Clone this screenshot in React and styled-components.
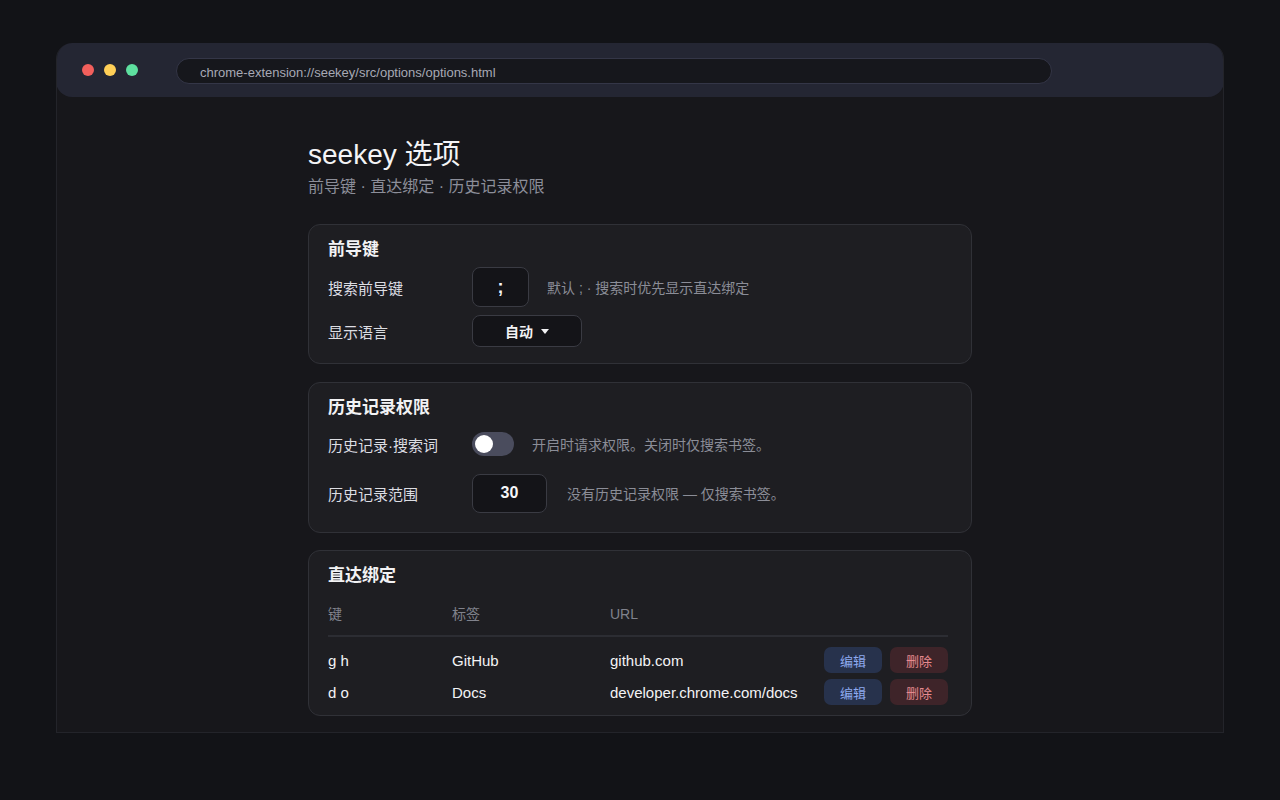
import React from 'react'
import styled, { createGlobalStyle } from 'styled-components'

const GlobalStyle = createGlobalStyle`
html, body {
    margin: 0;
    padding: 0;
    background: #121317;
    font-family: "Liberation Sans", "Noto Sans CJK SC", sans-serif;
    color: #f0f0f3;
}
* { box-sizing: border-box; }
`

const Page = styled.div`
padding: 43px 56px 0 56px;
height: 800px;
`
const Window = styled.div`
height: 690px;
display: flex;
flex-direction: column;
background: #17171b;
border: 1px solid #23242a;
border-top: none;
border-radius: 16px 16px 0 0;
overflow: hidden;
`
const TitleBar = styled.div`
flex: 0 0 54px;
display: flex;
align-items: center;
padding: 2px 26px 0 26px;
background: #242633;
border-radius: 16px;
margin: 0 -1px;
`
const Dots = styled.div`
display: flex;
gap: 10px;
margin-top: -2px;
`
const Dot = styled.span`
width: 12px;
height: 12px;
border-radius: 50%;
background: ${p => p.$c};
`
const UrlBar = styled.div`
margin-left: 38px;
width: 876px;
height: 26px;
border-radius: 13px;
background: #16171c;
border: 1px solid #343647;
display: flex;
align-items: center;
padding: 2px 0 0 23px;
font-size: 13px;
color: #a7a9b5;
`
const Main = styled.main`
flex: 1;
display: flex;
justify-content: center;
padding-top: 41px;
`
const Column = styled.div`
width: 664px;
display: flex;
flex-direction: column;
`
const Title = styled.h1`
margin: 0;
font-size: 28px;
line-height: 34px;
font-weight: 400;
color: #f4f4f6;
`
const Subtitle = styled.div`
margin-top: 5px;
font-size: 16px;
line-height: 20px;
color: #8c8e99;
`
const Card = styled.section`
margin-top: ${p => p.$top || 18}px;
background: #1e1e22;
border: 1px solid #303137;
border-radius: 12px;
padding: 14px 23px ${p => p.$pb || 15}px 19px;
`
const CardTitle = styled.h2`
margin: 0 0 ${p => p.$mb || 8}px 0;
font-size: 17px;
line-height: 22px;
font-weight: 600;
color: #f2f2f4;
`
const Rows = styled.div`
display: flex;
flex-direction: column;
gap: 8px;
`
const Row = styled.div`
display: flex;
align-items: center;
min-height: ${p => p.$h || 40}px;
`
const Label = styled.div`
width: 144px;
font-size: 15px;
color: #dcdde2;
`
const Hint = styled.div`
margin-left: ${p => p.$ml || 18}px;
font-size: 14px;
color: #8b8d97;
`
const KeyInput = styled.div`
width: ${p => p.$w}px;
height: ${p => p.$h}px;
border-radius: 8px;
background: #141418;
border: 1px solid #3a3b43;
display: flex;
align-items: center;
justify-content: center;
font-size: ${p => p.$fs || 16}px;
font-weight: 700;
color: #f6f6f8;
`
const Select = styled.div`
width: 110px;
height: 32px;
border-radius: 8px;
background: #141418;
border: 1px solid #3a3b43;
display: flex;
align-items: center;
justify-content: center;
gap: 8px;
font-size: 14px;
font-weight: 600;
color: #f2f2f4;
`
const Caret = styled.span`
width: 0;
height: 0;
border-left: 4.5px solid transparent;
border-right: 4.5px solid transparent;
border-top: 5px solid #f2f2f4;
margin-top: 1px;
`
const Toggle = styled.div`
width: 42px;
height: 24px;
border-radius: 12px;
background: #4a4c5d;
display: flex;
align-items: center;
padding-left: 3px;
`
const Knob = styled.span`
width: 18px;
height: 18px;
border-radius: 50%;
background: #ffffff;
`
const TableHead = styled.div`
display: grid;
grid-template-columns: 124px 158px 1fr;
margin-top: 13px;
padding: 4px 0 11px 0;
border-bottom: 2px solid #2c2d33;
font-size: 14px;
line-height: 20px;
color: #80828c;
`
const TableBody = styled.div`
padding-top: 7px;
`
const TableRow = styled.div`
display: grid;
grid-template-columns: 124px 158px 1fr auto;
align-items: center;
height: 32px;
font-size: 15px;
color: #f3f3f5;
`
const Actions = styled.div`
display: flex;
gap: 8px;
`
const Btn = styled.button`
width: 58px;
height: 26px;
border: none;
border-radius: 7px;
font-family: inherit;
font-size: 13px;
background: ${p => (p.$danger ? '#3e2429' : '#27324c')};
color: ${p => (p.$danger ? '#e68a8f' : '#8eaaf0')};
cursor: pointer;
`

const bindings = [
    { key: 'g h', label: 'GitHub', url: 'github.com' },
    { key: 'd o', label: 'Docs', url: 'developer.chrome.com/docs' },
]

export default function App() {
    return (
        <Page>
            <GlobalStyle />
            <Window>
                <TitleBar>
                    <Dots>
                        <Dot $c='#f25f5c' />
                        <Dot $c='#ffcf57' />
                        <Dot $c='#5ee0a0' />
                    </Dots>
                    <UrlBar>chrome-extension://seekey/src/options/options.html</UrlBar>
                </TitleBar>
                <Main>
                    <Column>
                        <Title>seekey 选项</Title>
                        <Subtitle>前导键 · 直达绑定 · 历史记录权限</Subtitle>

                        <Card $top={27} $pb={16}>
                            <CardTitle $mb={6}>前导键</CardTitle>
                            <Rows>
                                <Row>
                                    <Label>搜索前导键</Label>
                                    <KeyInput $w={57} $h={40} $fs={18}>;</KeyInput>
                                    <Hint>默认 ; · 搜索时优先显示直达绑定</Hint>
                                </Row>
                                <Row $h={32}>
                                    <Label>显示语言</Label>
                                    <Select>自动 <Caret /></Select>
                                </Row>
                            </Rows>
                        </Card>

                        <Card $pb={16}>
                            <CardTitle $mb={7}>历史记录权限</CardTitle>
                            <Rows>
                                <Row $h={36}>
                                    <Label>历史记录·搜索词</Label>
                                    <Toggle><Knob /></Toggle>
                                    <Hint>开启时请求权限。关闭时仅搜索书签。</Hint>
                                </Row>
                                <Row $h={46}>
                                    <Label>历史记录范围</Label>
                                    <KeyInput $w={75} $h={39} $fs={16}>30</KeyInput>
                                    <Hint $ml={20}>没有历史记录权限 — 仅搜索书签。</Hint>
                                </Row>
                            </Rows>
                        </Card>

                        <Card $pb={7} $top={17}>
                            <CardTitle>直达绑定</CardTitle>
                            <TableHead>
                                <span>键</span>
                                <span>标签</span>
                                <span>URL</span>
                            </TableHead>
                            <TableBody>
                                {bindings.map(b => (
                                    <TableRow key={b.key}>
                                        <span>{b.key}</span>
                                        <span>{b.label}</span>
                                        <span>{b.url}</span>
                                        <Actions>
                                            <Btn>编辑</Btn>
                                            <Btn $danger>删除</Btn>
                                        </Actions>
                                    </TableRow>
                                ))}
                            </TableBody>
                        </Card>
                    </Column>
                </Main>
            </Window>
        </Page>
    )
}
